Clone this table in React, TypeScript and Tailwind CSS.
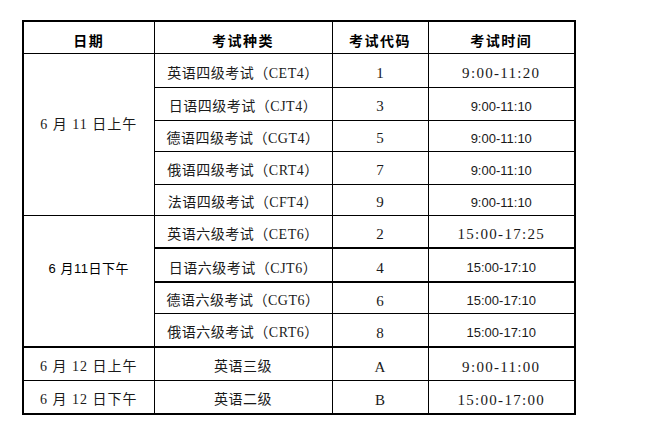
const serif = "font-['Liberation_Serif','Noto_Sans_CJK_SC',serif]";
const cjk = "font-['Noto_Sans_CJK_SC',sans-serif]";
const sans = "font-['Liberation_Sans','Noto_Sans_CJK_SC',sans-serif]";

type Row = {
  type: string;
  code: string;
  time: string;
  wide: boolean;
  h: string;
  thick?: boolean;
};

const groupA: Row[] = [
  { type: "英语四级考试（CET4）", code: "1", time: "9:00-11:20", wide: true, h: "h-[34px]" },
  { type: "日语四级考试（CJT4）", code: "3", time: "9:00-11:10", wide: false, h: "h-[33px]" },
  { type: "德语四级考试（CGT4）", code: "5", time: "9:00-11:10", wide: false, h: "h-[31px]" },
  { type: "俄语四级考试（CRT4）", code: "7", time: "9:00-11:10", wide: false, h: "h-[33px]" },
  { type: "法语四级考试（CFT4）", code: "9", time: "9:00-11:10", wide: false, h: "h-[31px]" },
];

const groupB: Row[] = [
  { type: "英语六级考试（CET6）", code: "2", time: "15:00-17:25", wide: true, h: "h-[33px]" },
  { type: "日语六级考试（CJT6）", code: "4", time: "15:00-17:10", wide: false, h: "h-[34px]", thick: true },
  { type: "德语六级考试（CGT6）", code: "6", time: "15:00-17:10", wide: false, h: "h-[31px]", thick: true },
  { type: "俄语六级考试（CRT6）", code: "8", time: "15:00-17:10", wide: false, h: "h-[34px]" },
];

const cell = "border border-black text-center align-middle p-0 pt-[6px]";

function TypeCell({ text, thick }: { text: string; thick?: boolean }) {
  return (
    <td className={`${cell} ${thick ? "border-t-2" : ""} ${serif} text-[14px] tracking-[0.5px] text-[#1a1a1a]`}>
      {text}
    </td>
  );
}

function CodeCell({ code, thick }: { code: string; thick?: boolean }) {
  return (
    <td className={`${cell} ${thick ? "border-t-2" : ""} ${serif} text-[15px] text-[#1a1a1a]`}>{code}</td>
  );
}

// the wide times are set like a fixed-pitch serif, the others in a plain sans
function TimeCell({ time, wide, thick }: { time: string; wide: boolean; thick?: boolean }) {
  return (
    <td
      className={`${cell} ${thick ? "border-t-2" : ""} ${
        wide ? `${serif} text-[15px] tracking-[1.3px]` : `${sans} text-[13px]`
      } text-[#1a1a1a]`}
    >
      {time}
    </td>
  );
}

export default function App() {
  return (
    <div className="w-[649px] h-[436px] bg-white pl-[22px] pt-[20px]">
      <table className="w-[552px] table-fixed border-collapse border-2 border-black">
        <colgroup>
          <col className="w-[131px]" />
          <col className="w-[178px]" />
          <col className="w-[96px]" />
          <col className="w-[147px]" />
        </colgroup>
        <thead>
          <tr className="h-[32px]">
            {["日期", "考试种类", "考试代码", "考试时间"].map((h) => (
              <th key={h} className={`${cell} ${cjk} text-[14px] font-bold tracking-[1.5px] text-black`}>
                {h}
              </th>
            ))}
          </tr>
        </thead>
        <tbody>
          {groupA.map((r, i) => (
            <tr key={r.code} className={r.h}>
              {i === 0 ? (
                <td
                  rowSpan={5}
                  className={`border border-black text-center align-middle p-0 pb-[20px] ${serif} text-[14px] tracking-[1px] text-[#1a1a1a]`}
                >
                  6 月 11 日上午
                </td>
              ) : null}
              <TypeCell text={r.type} />
              <CodeCell code={r.code} />
              <TimeCell time={r.time} wide={r.wide} />
            </tr>
          ))}
          {groupB.map((r, i) => (
            <tr key={r.code} className={r.h}>
              {i === 0 ? (
                <td
                  rowSpan={4}
                  className={`border border-black text-center align-middle p-0 pb-[24px] ${sans} text-[13px] tracking-[0.5px] text-black`}
                >
                  6 月11日下午
                </td>
              ) : null}
              <TypeCell text={r.type} thick={r.thick} />
              <CodeCell code={r.code} thick={r.thick} />
              <TimeCell time={r.time} wide={r.wide} thick={r.thick} />
            </tr>
          ))}
          <tr className="h-[33px]">
            <td className={`${cell} border-t-2 ${serif} text-[14px] tracking-[1px] text-[#1a1a1a]`}>6 月 12 日上午</td>
            <TypeCell text="英语三级" thick />
            <CodeCell code="A" thick />
            <TimeCell time="9:00-11:00" wide thick />
          </tr>
          <tr className="h-[34px]">
            <td className={`${cell} ${serif} text-[14px] tracking-[1px] text-[#1a1a1a]`}>6 月 12 日下午</td>
            <TypeCell text="英语二级" />
            <CodeCell code="B" />
            <TimeCell time="15:00-17:00" wide />
          </tr>
        </tbody>
      </table>
    </div>
  );
}
